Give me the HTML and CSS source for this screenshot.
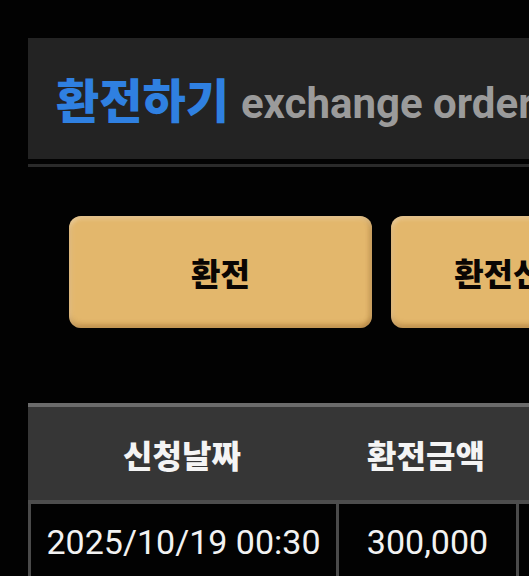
FILE: index.html
```html
<!DOCTYPE html>
<html lang="ko">
<head>
<meta charset="utf-8">
<title>환전하기</title>
<link rel="stylesheet" href="styles.css">
</head>
<body>
<div class="page">
  <header class="title-panel">
    <h1 class="title"><span class="title-ko">환전하기</span> <span class="title-en">exchange order</span></h1>
  </header>
  <div class="divider"></div>
  <nav class="tabs">
    <button class="tab">환전</button>
    <button class="tab">환전신청내역</button>
  </nav>
  <div class="table">
    <div class="row head">
      <div class="cell">신청날짜</div>
      <div class="cell">환전금액</div>
      <div class="cell">상태</div>
    </div>
    <div class="row body">
      <div class="cell">2025/10/19 00:30</div>
      <div class="cell">300,000</div>
      <div class="cell">대기</div>
    </div>
  </div>
</div>
</body>
</html>
```
FILE: styles.css
```css
html, body {
  margin: 0;
  padding: 0;
  background: #020202;
  overflow: hidden;
}
.page {
  padding: 38px 0 0 28px;
  width: 760px;
  font-family: Roboto, "Noto Sans CJK KR", sans-serif;
}
.title-panel {
  background: #232323;
  height: 121px;
  display: flex;
  align-items: center;
  padding-left: 28px;
}
.title {
  margin: 0;
  line-height: 1;
  white-space: nowrap;
  font-weight: 700;
  padding-top: 2px;
}
.title-ko {
  font-family: "Noto Sans CJK KR", sans-serif;
  font-size: 47px;
  font-weight: 900;
  color: #2f80e1;
}
.title-en {
  font-family: Roboto, sans-serif;
  font-size: 42px;
  font-weight: 700;
  color: #9b9b9b;
  margin-left: 4px;
}
.divider {
  height: 3px;
  background: #2a2a2a;
  margin-top: 5px;
}
.tabs {
  display: flex;
  gap: 19px;
  margin: 49px 0 0 41px;
}
.tab {
  width: 303px;
  height: 112px;
  flex: none;
  border: 0;
  border-radius: 12px;
  background: #e3b76c;
  box-shadow: inset 0 3px 4px rgba(255, 255, 255, 0.25),
              inset 0 -4px 5px rgba(120, 70, 10, 0.28),
              inset -3px 0 4px rgba(120, 70, 10, 0.22),
              inset 3px 0 4px rgba(255, 255, 255, 0.15);
  font-family: "Noto Sans CJK KR", sans-serif;
  font-size: 32px;
  font-weight: 900;
  color: #0a0603;
  padding: 0;
}
.table {
  margin-top: 75px;
}
.row {
  display: grid;
  grid-template-columns: 308px 180px 1fr;
}
.head {
  background: #363636;
  border-top: 4px solid #6b6b6b;
  border-bottom: 4px solid #4d4d4d;
  height: 93px;
}
.head .cell {
  display: flex;
  align-items: center;
  justify-content: center;
  font-family: "Noto Sans CJK KR", sans-serif;
  font-size: 32px;
  font-weight: 900;
  color: #f4f4f4;
}
.body .cell {
  height: 76px;
  border-left: 3px solid #4a4a4a;
  display: flex;
  align-items: center;
  justify-content: center;
  font-family: Roboto, "Noto Sans CJK KR", sans-serif;
  font-size: 34px;
  color: #f2f2f2;
  padding-bottom: 4px;
}
```
